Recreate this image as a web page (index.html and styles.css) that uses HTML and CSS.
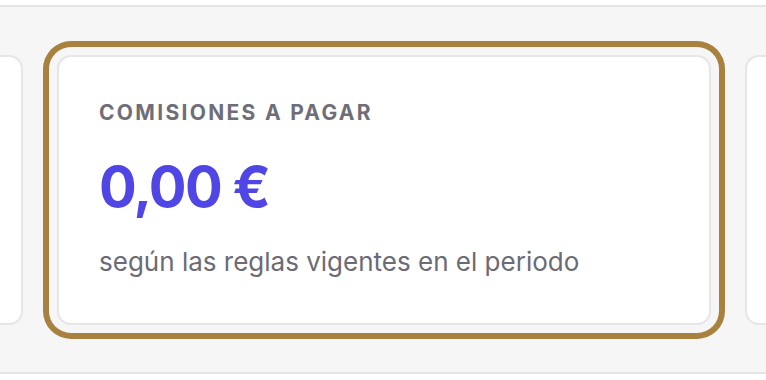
FILE: index.html
```html
<!DOCTYPE html>
<html lang="es">
<head>
<meta charset="utf-8">
<link rel="stylesheet" href="styles.css">
</head>
<body>
<section class="strip">
  <div class="track">
    <div class="card"></div>
    <div class="card active">
      <div class="label">COMISIONES A PAGAR</div>
      <div class="amount">0,00 €</div>
      <div class="note">según las reglas vigentes en el periodo</div>
    </div>
    <div class="card"></div>
  </div>
</section>
</body>
</html>
```
FILE: styles.css
```css
html, body {
  margin: 0;
  padding: 0;
  background: #ffffff;
  font-family: Inter, "Noto Sans", sans-serif;
}
.strip {
  margin-top: 5px;
  height: 369px;
  box-sizing: border-box;
  border-top: 2px solid #e4e4e4;
  border-bottom: 2px solid #e4e4e4;
  background: #f6f6f6;
  overflow: hidden;
}
.track {
  display: flex;
  justify-content: center;
  gap: 34px;
  padding: 48px 0 0 2px;
}
.card {
  flex: 0 0 654px;
  height: 270px;
  box-sizing: border-box;
  background: #ffffff;
  border: 2px solid #e6e6e9;
  border-radius: 14px;
  padding: 43px 40px 0 40px;
}
.active {
  box-shadow: 0 0 0 8px #f6f6f6, 0 0 0 14px #a8813f;
}
.label {
  font-size: 21px;
  font-weight: 700;
  letter-spacing: 0.11em;
  color: #6e6e78;
  line-height: 26px;
}
.amount {
  margin-top: 29px;
  font-size: 56px;
  font-weight: 700;
  letter-spacing: -0.03em;
  color: #4f46e5;
  line-height: 64px;
}
.note {
  margin-top: 27px;
  font-size: 26px;
  color: #6b6b75;
  line-height: 32px;
}
```
